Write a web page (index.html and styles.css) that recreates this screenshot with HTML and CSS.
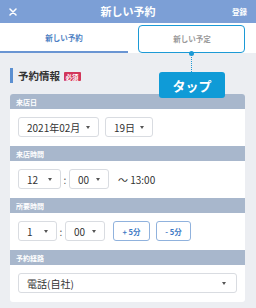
FILE: index.html
```html
<!DOCTYPE html>
<html lang="ja">
<head>
<meta charset="utf-8">
<link rel="stylesheet" href="styles.css">
</head>
<body>
<header class="topbar">
  <span class="close">
    <svg width="8" height="8" viewBox="0 0 8 8"><path d="M1 1L7 7M7 1L1 7" stroke="#fff" stroke-width="1.5" stroke-linecap="round"/></svg>
  </span>
  <h1 class="title">新しい予約</h1>
  <span class="save">登録</span>
</header>
<nav class="tabs">
  <div class="tab tab-active">新しい予約</div>
  <div class="tab tab-other">
    新しい予定
    <span class="highlight"></span>
    <span class="dot"></span>
    <span class="leader"></span>
    <span class="tooltip">タップ</span>
  </div>
</nav>
<div class="section-title">
  <span class="bar"></span>
  <span class="title-text">予約情報</span>
  <span class="badge">必須</span>
</div>
<main class="card">
  <div class="group-head">来店日</div>
  <div class="group-row">
    <div class="select w-month">2021年02月<i class="caret"></i></div>
    <div class="select w-day">19日<i class="caret"></i></div>
  </div>
  <div class="group-head">来店時間</div>
  <div class="group-row">
    <div class="select w-hour">12<i class="caret"></i></div>
    <span class="colon">:</span>
    <div class="select w-min">00<i class="caret"></i></div>
    <span class="until">〜 13:00</span>
  </div>
  <div class="group-head">所要時間</div>
  <div class="group-row">
    <div class="select w-dur">1<i class="caret"></i></div>
    <span class="colon">:</span>
    <div class="select w-min">00<i class="caret"></i></div>
    <button class="step step-plus">+ 5分</button>
    <button class="step step-minus">- 5分</button>
  </div>
  <div class="group-head">予約経路</div>
  <div class="group-row">
    <div class="select w-full">電話(自社)<i class="caret"></i></div>
  </div>
</main>
</body>
</html>
```
FILE: styles.css
```css
* { box-sizing: border-box; }
html, body { margin: 0; padding: 0; }
body {
  width: 256px;
  height: 308px;
  overflow: hidden;
  background: #eceef2;
  font-family: "Noto Sans CJK JP", "Noto Sans", sans-serif;
  color: #333;
}
.topbar {
  height: 23px;
  background: #7c9fd6;
  display: grid;
  grid-template-columns: 1fr auto 1fr;
  align-items: center;
  padding: 0 9px 0 9px;
  color: #fff;
}
.close { display: flex; align-items: center; }
.title {
  margin: 0;
  font-size: 11px;
  font-weight: 700;
  line-height: 1;
}
.save {
  justify-self: end;
  font-size: 7.5px;
  font-weight: 700;
}
.tabs {
  height: 30px;
  background: #fff;
  display: grid;
  grid-template-columns: 1fr 1fr;
}
.tab {
  display: flex;
  align-items: center;
  justify-content: center;
  font-size: 7.5px;
  padding-top: 1px;
  position: relative;
}
.tab-active {
  color: #4d7fc3;
  font-weight: 700;
  border-bottom: 2px solid #6a95d3;
}
.tab-other {
  color: #9a9a9a;
  font-weight: 700;
}
.highlight {
  position: absolute;
  left: 10px;
  top: 2px;
  width: 107px;
  height: 28px;
  border: 1.3px solid #1c9ad6;
  border-radius: 4px;
}
.dot {
  position: absolute;
  left: 61px;
  top: 27.5px;
  width: 5px;
  height: 5px;
  border-radius: 50%;
  background: #1c9ad6;
}
.leader {
  position: absolute;
  left: 63px;
  top: 32px;
  height: 17px;
  border-left: 1px dotted #1c9ad6;
}
.tooltip {
  position: absolute;
  left: 31px;
  top: 49px;
  width: 66px;
  height: 26px;
  background: #0f9bd7;
  border-radius: 3px;
  color: #fff;
  font-size: 13px;
  font-weight: 700;
  display: flex;
  align-items: center;
  justify-content: center;
  z-index: 2;
}
.section-title {
  display: flex;
  align-items: center;
  height: 15px;
  margin-top: 15px;
  padding-left: 10px;
}
.bar {
  width: 2.5px;
  height: 15px;
  background: #5b8fd1;
  margin-right: 5.5px;
}
.title-text {
  font-size: 10.5px;
  font-weight: 700;
  color: #333;
}
.badge {
  margin-left: 3.5px;
  margin-top: 2px;
  background: #d2365a;
  color: #fff;
  font-size: 6.5px;
  font-weight: 700;
  height: 9.5px;
  padding: 0 2px;
  display: flex;
  align-items: center;
  border-radius: 1px;
}
.card {
  margin: 11px 11px 0 10px;
  background: #fff;
  border-radius: 3px;
  overflow: hidden;
}
.group-head {
  height: 15px;
  background: #a8b7cc;
  color: #fff;
  font-size: 7px;
  font-weight: 700;
  padding-left: 6px;
  display: flex;
  align-items: center;
}
.group-row {
  display: flex;
  align-items: center;
  padding: 8px 8px 9px 8px;
}
.select {
  height: 20px;
  border: 1px solid #d9dce1;
  border-radius: 3px;
  display: flex;
  align-items: center;
  justify-content: space-between;
  padding: 0 8px;
  font-size: 10px;
  color: #333;
}
.caret {
  width: 0;
  height: 0;
  border-left: 2.5px solid transparent;
  border-right: 2.5px solid transparent;
  border-top: 3px solid #555;
}
.w-month { width: 81px; margin-right: 6px; }
.w-day { width: 48px; }
.w-hour { width: 43px; }
.w-dur { width: 39px; }
.w-min { width: 40px; }
.w-full { width: 219px; padding-right: 10px; }
.colon {
  width: 8px;
  text-align: center;
  font-size: 10px;
  color: #555;
}
.until {
  margin-left: 9px;
  font-size: 10px;
  color: #333;
}
.step {
  height: 20px;
  border: 1px solid #90b2dd;
  border-radius: 3px;
  background: #fff;
  color: #3c78c4;
  font-family: inherit;
  font-size: 7.5px;
  font-weight: 700;
  padding: 0;
  margin: 0;
}
.step-plus { width: 37px; margin-left: 8px; }
.step-minus { width: 35px; margin-left: 6px; }
```
